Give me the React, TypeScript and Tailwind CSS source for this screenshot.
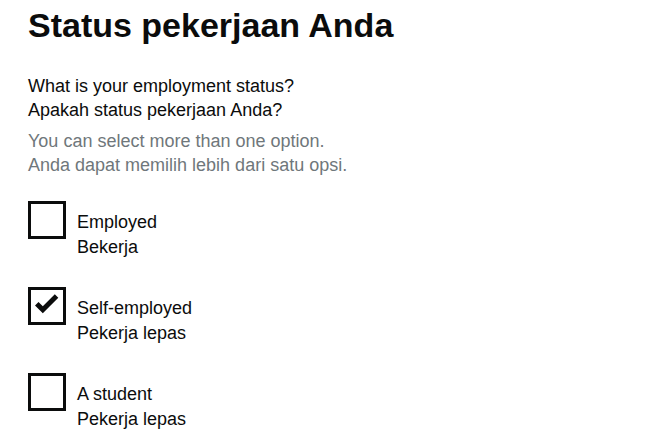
import React from 'react'

const options = [
  { en: 'Employed', id: 'Bekerja', checked: false },
  { en: 'Self-employed', id: 'Pekerja lepas', checked: true },
  { en: 'A student', id: 'Pekerja lepas', checked: false },
]

function CheckBox({ checked }: { checked: boolean }) {
  return (
    <div className="w-[38px] h-[38px] shrink-0 border-[3px] border-[#0b0c0c] bg-white">
      {checked && (
        <svg width="32" height="32" viewBox="0 0 32 32">
          <polygon points="4,15.5 11.8,23.3 27.3,7.7 23.8,4.2 11.8,16.2 7.5,12" fill="#0b0c0c" />
        </svg>
      )}
    </div>
  )
}

export default function App() {
  return (
    <div className="min-h-screen bg-white text-[#0b0c0c] pl-[28px] pt-[5px]" style={{ fontFamily: '"Liberation Sans", Arial, sans-serif' }}>
      <h1 className="text-[34px] leading-[40px] font-bold">Status pekerjaan Anda</h1>

      <fieldset className="mt-[29px]">
        <legend className="text-[18px] leading-[24px]">
          What is your employment status?
          <br />
          Apakah status pekerjaan Anda?
        </legend>
        <div className="mt-[7px] text-[18px] leading-[24px] text-[#6f777b]">
          You can select more than one option.
          <br />
          Anda dapat memilih lebih dari satu opsi.
        </div>

        <div className="mt-[24px] flex flex-col gap-[27px]">
          {options.map((o, i) => (
            <label key={i} className="flex items-start">
              <CheckBox checked={o.checked} />
              <span className="ml-[11px] pt-[9px] text-[18px] leading-[25px]">
                {o.en}
                <br />
                {o.id}
              </span>
            </label>
          ))}
        </div>
      </fieldset>
    </div>
  )
}
